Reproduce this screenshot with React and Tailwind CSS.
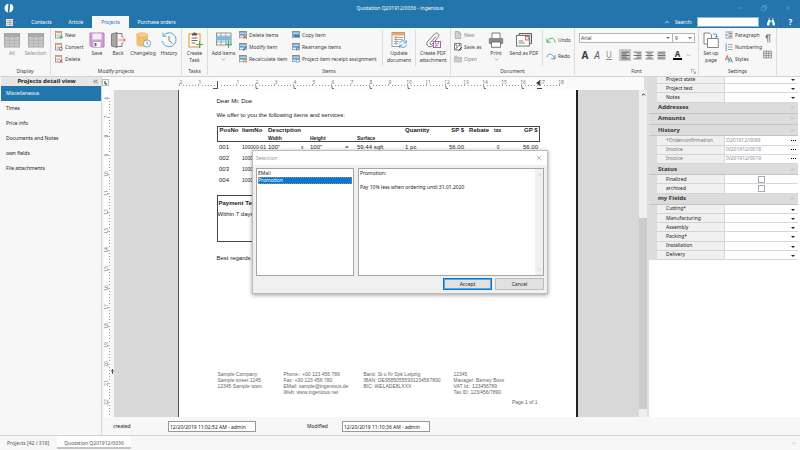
import { ChevronDown, ChevronUp, ChevronsLeft, Minus, X } from "lucide-react";
import { FaBinoculars } from "react-icons/fa";
import clsx from "clsx";

const GREY = "#6b6b6b";
const BLUE = "#4a9bd1";

/* ---------- large ribbon icons (16 x 16) ---------- */

const Svg = ({ size = 16, children }) => (
  <svg width={size} height={size} viewBox="0 0 16 16" fill="none" className="shrink-0">
    {children}
  </svg>
);

const GridIcon = () => (
  <Svg>
    <rect x="0.5" y="1.5" width="15" height="13.5" fill="#c6c6c6" stroke="#a9a9a9" />
    <rect x="1" y="2" width="14" height="3" fill="#aaa" />
    <path d="M1 8.5H15M1 11.5H15M5.5 5V15M10.5 5V15" stroke="#b2b2b2" strokeWidth="0.7" />
  </Svg>
);

const SaveIcon = () => (
  <Svg>
    <path d="M1 1H15V15H2.5L1 13.5Z" fill="#cf9fd3" stroke="#b57dbb" />
    <rect x="3.5" y="1.5" width="9" height="6" fill="#f6eef7" />
    <rect x="4.5" y="10" width="7" height="5" fill="#fff" />
    <rect x="5.5" y="11" width="2" height="3.5" fill="#8d5c93" />
  </Svg>
);

const BackIcon = () => (
  <Svg>
    <path d="M7 1.5H12V5M12 11V14.5H7" stroke={GREY} strokeWidth="0.9" />
    <path d="M1.5 2L7 0.5V15.5L1.5 14Z" fill="#a8a8a8" stroke={GREY} strokeWidth="0.8" />
    <path d="M8.5 8H15M12.5 5L15.3 8L12.5 11" stroke="#ea5a50" strokeWidth="0.9" />
  </Svg>
);

const ChangelogIcon = () => (
  <Svg>
    <path d="M1.5 3V12.5C1.5 15.5 13 15.5 13 12.5V3" fill="#f2bf6c" />
    <ellipse cx="7.2" cy="3" rx="5.8" ry="2.2" fill="#f6cf8b" stroke="#e6a94c" strokeWidth="0.6" />
    <circle cx="12" cy="11.5" r="3.6" fill="#fff" stroke={BLUE} strokeWidth="0.8" />
    <path d="M12 9.5V11.7L13.5 12.7" stroke="#555" strokeWidth="0.7" />
  </Svg>
);

const HistoryIcon = () => (
  <Svg>
    <path d="M2.5 3.5A7 7 0 1 1 1.2 9" stroke={BLUE} strokeWidth="0.9" />
    <path d="M2 0.8V4.3H5.5" stroke={BLUE} strokeWidth="0.9" />
    <path d="M8 4V8.5L11.5 11.5" stroke={GREY} strokeWidth="0.9" />
  </Svg>
);

const TaskIcon = () => (
  <Svg>
    <rect x="2" y="2" width="11" height="13" fill="#fff" stroke="#eda653" strokeWidth="1.3" />
    <path d="M5 3.5V1.5H6.5V0.5H8.5V1.5H10V3.5Z" fill="#555" />
    <path d="M4.5 6H10.5M4.5 8.5H10.5M4.5 11H8.5" stroke={GREY} strokeWidth="1" />
    <path d="M12.5 9V16M9 12.5H16" stroke="#3fae69" strokeWidth="1.1" />
  </Svg>
);

const AddItemsIcon = () => (
  <Svg>
    <rect x="0.5" y="1" width="14.5" height="12" fill="#fff" stroke="#777" strokeWidth="0.8" />
    <path d="M5 1V13M10 1V13M0.5 4H15M0.5 10H15" stroke="#888" strokeWidth="0.7" />
    <rect x="0.3" y="4.5" width="15" height="4" fill="#7bb8e2" />
    <path d="M12.5 8.5V16M9 12.3H16" stroke="#3fae69" strokeWidth="1.1" />
  </Svg>
);

const UpdateIcon = () => (
  <Svg>
    <rect x="1" y="0.5" width="12.5" height="14" fill="#fff" stroke="#888" strokeWidth="0.8" />
    <rect x="1.2" y="0.8" width="12" height="2.7" fill="#f1a45d" />
    <path d="M3 5.5H12M3 7.5H12M3 9.5H8M3 11.5H7M5 4V13" stroke="#888" strokeWidth="0.7" />
    <circle cx="12" cy="12" r="4" fill="#f7f7f7" />
    <path d="M8.5 11.5A3.5 3.5 0 0 1 15 10.5M15.5 12.5A3.5 3.5 0 0 1 9 13.8M15.3 8V11H12.5M8.7 16V13.3H11.5" stroke={BLUE} strokeWidth="0.9" />
  </Svg>
);

const PdfAttachIcon = () => (
  <Svg>
    <path d="M11 4.5L5.5 10.5C4 12 6 13.5 7.3 12L13 5.5C15.5 2.5 12 -0.5 9.5 2L3 9C-0.5 13 4.5 17 8 13.5" stroke={GREY} strokeWidth="0.9" />
    <rect x="8.5" y="9.5" width="7" height="6" fill="#fff" stroke="#a55fae" />
    <path d="M10.5 9.5V12H13.5V9.5M10.5 15V13.5H13" stroke="#a55fae" strokeWidth="0.8" />
  </Svg>
);

const PrintIcon = () => (
  <Svg>
    <path d="M4 6V1H12V6" fill="#fff" stroke={GREY} strokeWidth="0.9" />
    <rect x="0.8" y="6" width="14.4" height="6" rx="0.8" fill="#8a8a8a" />
    <rect x="2" y="7.5" width="1.5" height="1.2" fill="#4a9bd1" />
    <path d="M3.5 10H12.5V15.3H3.5Z" fill="#fff" stroke={GREY} strokeWidth="0.9" />
  </Svg>
);

const SendIcon = () => (
  <Svg>
    <path d="M3 3.5V1.5H15.5V11.5H13.5" fill="#ddd" stroke="#555" strokeWidth="0.9" />
    <rect x="0.5" y="3.5" width="12.8" height="10.5" fill="#fff" stroke="#666" strokeWidth="0.9" />
    <rect x="9.5" y="4.5" width="2.7" height="3.5" fill="#fff" stroke="#e25549" strokeWidth="0.9" />
    <path d="M2.5 9H7.5M2.5 11H8.5" stroke="#777" strokeWidth="0.9" />
  </Svg>
);

const PageSetupIcon = () => (
  <Svg>
    <path d="M1 1H6.5L8.5 3V12H1Z" fill="#fff" stroke="#777" strokeWidth="0.9" />
    <path d="M4.5 6.5H15.3V15.5H4.5Z" fill="#fff" stroke="#777" strokeWidth="0.9" />
    <path d="M10 2H13.5V5.5M11.8 4L13.5 5.7L15.2 4" stroke={BLUE} strokeWidth="0.9" />
  </Svg>
);

/* ---------- small ribbon icons (8 x 8) ---------- */

const RecordIcon = ({ kind }) => (
  <Svg size={8}>
    <rect x="1" y="1" width="12" height="13" fill="#fff" stroke="#777" strokeWidth="1.4" />
    <rect x="1" y="1" width="12" height="3" fill="#eda45c" />
    <path d="M3 6.5H11M3 9H9M3 11.5H7" stroke="#999" strokeWidth="1.1" />
    {kind === "new" && <path d="M12 8V16M8 12H16" stroke="#3fae69" strokeWidth="1.8" />}
    {kind === "convert" && <circle cx="11.5" cy="11.5" r="3" fill="#fff" stroke="#555" strokeWidth="1.6" />}
    {kind === "delete" && <path d="M9 9L15.5 15.5M15.5 9L9 15.5" stroke="#e0443c" strokeWidth="1.8" />}
  </Svg>
);

const ItemIcon = ({ kind }) => (
  <Svg size={8}>
    <rect x="1" y="1.5" width="14" height="12" fill="#fff" stroke="#777" strokeWidth="1.2" />
    <rect x="0.5" y="1" width="15" height="2" fill="#666" />
    <rect x="1" y="5" width="14" height="4.5" fill="#5aa7db" />
    <path d="M5.5 9.5V14M10 9.5V14" stroke="#999" />
    {kind === "delete" && <path d="M9 9L15.5 15.5M15.5 9L9 15.5" stroke="#e0443c" strokeWidth="1.8" />}
    {kind === "modify" && <path d="M8 15L14.5 8" stroke="#2b7fbf" strokeWidth="2.4" />}
    {kind === "recalc" && <path d="M9 15L14 8M9 9.5H12M12 14H15.5" stroke="#ee8f2d" strokeWidth="1.9" />}
    {kind === "copy" && <rect x="3" y="8" width="12" height="4" fill="#2b83c4" />}
    {kind === "sort" && <path d="M9 9V15M12.5 15V8M10.5 10.5L12.5 8L15 10.5" stroke="#2b83c4" strokeWidth="1.5" />}
    {kind === "assign" && <circle cx="11.5" cy="11.5" r="3.2" fill="#fff" stroke="#3b8ec9" strokeWidth="1.5" />}
  </Svg>
);

const FileIcon = () => (
  <Svg size={8}>
    <path d="M2.5 1H9.5L13.5 5V15H2.5Z" fill="#d2d2d2" stroke="#999" strokeWidth="1.3" />
    <path d="M9.5 1V5H13.5" stroke="#999" strokeWidth="1.2" />
  </Svg>
);

const SaveAsIcon = () => (
  <Svg size={8}>
    <path d="M1 1H14V14H1Z" fill="#fff" stroke="#555" strokeWidth="1.5" />
    <path d="M4 1V6H11V1M4 14V9.5H8" stroke="#555" strokeWidth="1.4" />
    <path d="M9 15L15.5 8.5" stroke="#333" strokeWidth="2" />
  </Svg>
);

const FolderIcon = () => (
  <Svg size={8}>
    <path d="M1 2.5H6L7.5 4.5H15V14H1Z" fill="#cfcfcf" stroke="#a6a6a6" strokeWidth="1.2" />
    <path d="M1.5 7H14.5" stroke="#b0b0b0" />
  </Svg>
);

const ParagraphIcon = () => (
  <Svg size={8}>
    <path d="M1 2H15M7 5H15M7 8H15M7 11H15M1 14H15" stroke="#666" strokeWidth="1.4" />
    <path d="M0 8H4M2.5 5.5L5 8L2.5 10.5" stroke="#3b8ec9" strokeWidth="1.6" />
  </Svg>
);

const NumberingIcon = () => (
  <Svg size={8}>
    <path d="M6 3H15M6 8H15M6 13H15" stroke="#777" strokeWidth="1.3" />
    <path d="M2.5 1V15M1 1.5H2.5M1 6H4M1 10.5H4M1 15H4" stroke="#3b8ec9" strokeWidth="1.2" />
  </Svg>
);

const StylesIcon = () => (
  <Svg size={8}>
    <path d="M0.5 11L4.5 1L8 11M2 8H7" stroke="#e0443c" strokeWidth="1.6" />
    <path d="M7 15L11 5L15 15M8.5 12H13.5" stroke="#3b8ec9" strokeWidth="1.7" />
  </Svg>
);

const CurveArrow = ({ redo }) => (
  <Svg size={10}>
    {redo ? (
      <path d="M1.5 10C2 4 9 2 14 12M14.5 6.5V12.5H8.5" stroke={BLUE} strokeWidth="1.5" />
    ) : (
      <path d="M14.5 12C14 4 7 2 2 11M1.5 5.5V11.5H7.5" stroke="#3fae69" strokeWidth="1.5" />
    )}
  </Svg>
);

const AlignIcon = ({ kind }) => {
  const short = { left: "M1 5H10M1 11H10", right: "M6 5H15M6 11H15", center: "M4 5H12M4 11H12", justify: "M1 5H15M1 11H15" };
  return (
    <Svg size={9}>
      <path d={`M1 2H15M1 8H15M1 14H15${short[kind]}`} stroke="#555" strokeWidth="1.5" />
    </Svg>
  );
};

/* ---------- ribbon building blocks ---------- */

const BigButton = ({ icon, lines, width, arrow, muted }) => (
  <button className={clsx("flex flex-col items-center pt-1", width, muted && "text-[#8a8a8a]")}>
    {icon}
    <span className="mt-[2px] leading-[7px]">
      {lines.map((line) => (
        <span key={line} className="block whitespace-nowrap">{line}</span>
      ))}
    </span>
    {arrow && <ChevronDown size={5} />}
  </button>
);

const SmallButton = ({ icon, label, muted }) => (
  <button className={clsx("flex h-3 items-center gap-[2px] whitespace-nowrap", muted && "text-[#8a8a8a]")}>
    {icon}
    {label}
  </button>
);

const Group = ({ label, width, children, launcher }) => (
  <section className={clsx("relative shrink-0 border-r border-[#dcdcdc]", width)}>
    <div className="flex h-10">{children}</div>
    <h2 className="text-center leading-[7px]">{label}</h2>
    {launcher && (
      <button aria-label="Font settings" className="absolute right-[2px] bottom-px">
        <Svg size={5}>
          <path d="M1 12V1H12M6 6L14 14M14 8V14H8" stroke="#777" strokeWidth="1.8" />
        </Svg>
      </button>
    )}
  </section>
);

const Divider = () => <div className="mt-[2px] h-9 w-px shrink-0 bg-[#dcdcdc]" />;

const TitleBar = () => (
  <header className="bg-[#2276ab] text-white">
    <div className="grid h-4 grid-cols-[1fr_auto_1fr] items-center">
      <svg width="10" height="10" viewBox="0 0 16 16" className="ml-1">
        <path d="M7 1C2 2 0 6 1.5 11C2 13 4 14.5 6 15Z" fill="#fff" />
        <path d="M10 1C14 2 16 6 14.5 10C13.5 13 11.5 14.5 8.5 15Z" fill="#fff" />
      </svg>
      <h1>Quotation Q201912/0036 - ingenious</h1>
      <div className="flex justify-end gap-[18px] pr-[9px] text-[#78adcf]">
        <button aria-label="Minimize"><Minus size={6} /></button>
        <button aria-label="Restore">
          <Svg size={6}>
            <path d="M1 5H11V15H1ZM5 5V1H15V11H11" stroke="currentColor" strokeWidth="1.6" />
          </Svg>
        </button>
        <button aria-label="Close"><X size={6} /></button>
      </div>
    </div>
    <nav className="flex h-3 items-center">
      <button aria-label="Menu" className="ml-[6px] flex w-[17px] items-center gap-px">
        <Svg size={7}>
          <path d="M0 0H16V16H0Z" fill="#f1ebe6" />
          <path d="M1 4H15M1 8H15M1 12H15M9 1V15" stroke="#857a74" strokeWidth="1.2" />
        </Svg>
        <ChevronDown size={3} />
      </button>
      <a href="#contacts" className="w-[37px] text-center">Contacts</a>
      <a href="#article" className="w-8 text-center">Article</a>
      <a href="#projects" className="h-3 w-[37px] bg-[#f7f7f7] text-center leading-[12px] text-[#2276ab]">Projects</a>
      <a href="#orders" className="w-[55px] text-center">Purchase orders</a>
      <div className="ml-auto flex items-center">
        <ChevronUp size={6} strokeWidth={3} />
        <label htmlFor="search" className="ml-[5px] w-[22px]">Search:</label>
        <input id="search" className="h-[10px] w-[62px] border border-[#8fb6d0] bg-white px-1 text-black outline-none" />
        <button aria-label="Find" className="ml-[3px] flex h-[10px] w-[17px] items-center justify-center border border-[#3f6fb4]">
          <FaBinoculars size={8} />
        </button>
        <button aria-label="Help" className="mr-px ml-[3px] h-[10px] w-[17px] border border-[#3f6fb4] text-[8px] leading-[8px] font-bold">?</button>
      </div>
    </nav>
  </header>
);

const Ribbon = () => (
  <div className="flex overflow-hidden border-b border-[#d2d2d2] bg-[#f7f7f7] pb-px text-[#3c3c3c]">
    <Group label="Display" width="w-[51px]">
      <BigButton icon={<GridIcon />} lines={["All"]} width="w-6" muted />
      <BigButton icon={<GridIcon />} lines={["Selection"]} width="w-[23px]" muted />
    </Group>
    <Group label="Modify projects" width="w-[131px]">
      <div className="w-[34px] shrink-0 pt-px pl-1">
        <SmallButton icon={<RecordIcon kind="new" />} label="New" />
        <SmallButton icon={<RecordIcon kind="convert" />} label="Convert" />
        <SmallButton icon={<RecordIcon kind="delete" />} label="Delete" />
      </div>
      <BigButton icon={<SaveIcon />} lines={["Save"]} width="w-6" />
      <BigButton icon={<BackIcon />} lines={["Back"]} width="w-[18px]" />
      <BigButton icon={<ChangelogIcon />} lines={["Changelog"]} width="w-8" />
      <BigButton icon={<HistoryIcon />} lines={["History"]} width="w-5" />
    </Group>
    <Group label="Tasks" width="w-[26px]">
      <BigButton icon={<TaskIcon />} lines={["Create", "Task"]} width="w-full" />
    </Group>
    <Group label="Items" width="w-[243px]">
      <BigButton icon={<AddItemsIcon />} lines={["Add items"]} width="w-[31px]" arrow />
      <div className="w-[53px] pt-px">
        <SmallButton icon={<ItemIcon kind="delete" />} label="Delete items" />
        <SmallButton icon={<ItemIcon kind="modify" />} label="Modify item" />
        <SmallButton icon={<ItemIcon kind="recalc" />} label="Recalculate item" />
      </div>
      <div className="w-[90px] pt-px">
        <SmallButton icon={<ItemIcon kind="copy" />} label="Copy item" />
        <SmallButton icon={<ItemIcon kind="sort" />} label="Rearrange items" />
        <SmallButton icon={<ItemIcon kind="assign" />} label="Project item receipt assignment" />
      </div>
      <Divider />
      <BigButton icon={<UpdateIcon />} lines={["Update", "document"]} width="w-8" />
      <Divider />
      <BigButton icon={<PdfAttachIcon />} lines={["Create PDF", "attachment"]} width="w-[34px]" />
    </Group>
    <Group label="Document" width="w-[124px]">
      <div className="w-[35px] pt-px pl-[3px]">
        <SmallButton icon={<FileIcon />} label="New" muted />
        <SmallButton icon={<SaveAsIcon />} label="Save as" />
        <SmallButton icon={<FolderIcon />} label="Open" muted />
      </div>
      <BigButton icon={<PrintIcon />} lines={["Print"]} width="w-5" arrow />
      <BigButton icon={<SendIcon />} lines={["Send as PDF"]} width="w-9" />
      <Divider />
      <div className="flex flex-col gap-1 pt-[6px] pl-[3px]">
        <SmallButton icon={<CurveArrow />} label="Undo" />
        <SmallButton icon={<CurveArrow redo />} label="Redo" />
      </div>
    </Group>
    <Group label="Font" width="w-[124px]" launcher>
      <div className="flex w-full flex-col px-1 pt-[5px]">
        <div className="flex w-[116px]">
          <span className="relative flex w-[94px]">
            <select aria-label="Font family" className="h-[10px] w-full appearance-none border border-[#b5b5b5] bg-white px-px leading-[8px]">
              <option>Arial</option>
            </select>
            <DropArrow />
          </span>
          <span className="relative flex w-[22px]">
            <select aria-label="Font size" className="h-[10px] w-full appearance-none border border-l-0 border-[#b5b5b5] bg-white px-[2px] leading-[8px]">
              <option>9</option>
            </select>
            <DropArrow />
          </span>
        </div>
        <div className="mt-[6px] flex h-3 items-center">
          <button aria-label="Bold" className="w-3 text-[10px] leading-[12px] font-bold">A</button>
          <button aria-label="Italic" className="w-3 text-[10px] leading-[12px] text-[#666] italic">A</button>
          <button aria-label="Underline" className="w-3 text-[8px] leading-[12px] text-[#888] underline">U</button>
          <button aria-label="Align left" className="ml-1 flex h-3 w-3 items-center justify-center bg-[#c9c9c9]"><AlignIcon kind="left" /></button>
          <button aria-label="Align right" className="flex w-3 justify-center"><AlignIcon kind="right" /></button>
          <button aria-label="Align center" className="flex w-3 justify-center"><AlignIcon kind="center" /></button>
          <button aria-label="Justify" className="flex w-3 justify-center"><AlignIcon kind="justify" /></button>
          <button aria-label="Text colour" className="ml-[6px] w-[9px] border-b-2 border-black text-[8px] leading-[8px] font-bold">A</button>
          <ChevronDown size={5} className="ml-1" />
        </div>
      </div>
    </Group>
    <Group label="Settings" width="w-[78px]">
      <BigButton icon={<PageSetupIcon />} lines={["Set up", "page"]} width="w-6" />
      <div className="w-10 pt-px pl-[2px]">
        <SmallButton icon={<ParagraphIcon />} label="Paragraph" />
        <SmallButton icon={<NumberingIcon />} label="Numbering" />
        <SmallButton icon={<StylesIcon />} label="Styles" />
      </div>
      <div className="flex flex-col gap-[7px] pt-[6px]">
        <button aria-label="Show marks">
          <Svg size={9}>
            <path d="M8 1.5A3.5 3.5 0 0 0 8 8.5Z" fill="#777" />
            <path d="M6 1.5H14M8.5 1.5V15M12 1.5V15" stroke="#777" strokeWidth="1.5" />
          </Svg>
        </button>
        <button aria-label="Gridlines">
          <Svg size={9}>
            <path d="M1 2H15V14H1ZM1 6H15M1 10H15M5.7 2V14M10.3 2V14" stroke="#777" strokeWidth="1.3" />
          </Svg>
        </button>
      </div>
    </Group>
  </div>
);

/* arrow drawn over the right edge of a drop-down */
const DropArrow = ({ dark }) => (
  <svg width="4" height="2" viewBox="0 0 4 2" className="pointer-events-none absolute top-1 right-[3px]">
    <path d="M0 0H4L2 2Z" fill={dark ? "#222" : "#777"} />
  </svg>
);

/* ---------- left navigation ---------- */

const views = ["Miscellaneous", "Times", "Price info", "Documents and Notes", "own fields", "File attachments"];

const Sidebar = () => (
  <aside className="w-[102px] shrink-0 border-r border-[#d5d5d5] pl-px">
    <div className="flex h-[9px] items-center bg-[#e6e6e6] pr-[2px]">
      <h2 className="flex-1 text-center text-[6px] font-bold text-[#222]">Projects detail view</h2>
      <button aria-label="Collapse"><ChevronsLeft size={7} color="#222" /></button>
    </div>
    <nav>
      {views.map((view, i) => (
        <a
          key={view}
          href="#view"
          className={clsx("block h-[15px] pl-[5px] leading-[15px]", i === 0 ? "bg-[#2276ab] text-white" : "text-[#222]")}
        >
          {view}
        </a>
      ))}
    </nav>
  </aside>
);

/* ---------- rulers ---------- */

const UNIT = 19;

const HorizontalRuler = () => (
  <svg width="400" height="13" viewBox="0 0 400 13" className="shrink-0" fontSize="5" fill="#777">
    <rect x="39" y="2" width="321" height="10" fill="#fff" />
    {Array.from({ length: 21 }, (_, i) => i - 2).map((n) => {
      const x = 40 + n * UNIT;
      return (
        <g key={n}>
          {n !== 0 && <text x={x + 1} y="7" textAnchor="middle">{Math.abs(n)}</text>}
          <path d={`M${x - 0.5} 7V9`} stroke="#888" strokeWidth="0.8" />
          {n < 18 && <path d={`M${x + 3} 8.5H${x + 17}`} stroke="#999" strokeDasharray="1 2" />}
          {n > 0 && n < 17 && n % 2 === 0 && <path d={`M${x} 9V11.5H${x + 2}`} stroke="#777" fill="none" />}
        </g>
      );
    })}
    <path d="M39.5 4V12M35 11.5H39" stroke="#555" />
    <path d="M358 6L362 3V9Z M359 11H364V12H359Z" fill="#444" />
  </svg>
);

const VerticalRuler = () => (
  <svg width="12" height="327" viewBox="0 0 12 327" className="shrink-0" fontSize="5" fill="#777">
    <rect x="2" y="0" width="6" height="327" fill="#fff" />
    {Array.from({ length: 17 }, (_, i) => i + 6).map((n) => {
      const y = 8 + (n - 6) * UNIT;
      return (
        <g key={n}>
          <text x="6" y={y} textAnchor="middle" transform={`rotate(-90 6 ${y})`}>{n}</text>
          <path d={`M5 ${y + 0.5}H8`} stroke="#999" strokeWidth="0.7" />
          <path d={`M7.5 ${y + 3}V${y + 17}`} stroke="#999" strokeDasharray="1 2" />
        </g>
      );
    })}
    <path d="M9 281H12M10.5 279V284" stroke="#555" />
  </svg>
);

/* ---------- printed quotation ---------- */

const positions = [
  { no: "001", item: "100000-01", width: '100"', x: "x", height: '100"', eq: "=", surface: "59.44 sqft", qty: "1 pc", price: "56.00", tax: "0", total: "56.00" },
  { no: "002", item: "1000" },
  { no: "003", item: "1000" },
  { no: "004", item: "1000" },
];

const footer = [
  ["Sample Company", "Sample street 1245", "12345 Sample town"],
  ["Phone.: +00 123 456 789", "Fax: +00 123 456 780", "EMail: sample@ingenious.de", "Web: www.ingenious.net"],
  ["Bank: St u Kr Spk Leipzig", "IBAN: DE95850555931234567890", "BIC: WELADE8LXXX"],
  ["12345", "Manager: Barney Boss", "VAT Id.: 123456789", "Tax ID: 123/456/7890"],
];

const Paper = () => (
  <article className="flex w-[400px] shrink-0 flex-col border-r-2 border-l border-r-[#222] border-l-[#555] bg-white pr-9 pl-[38px] font-['Liberation_Sans',Arial,sans-serif] text-[6px] leading-[7px] text-[#222]">
    <p className="pt-2">Dear Mr. Doe</p>
    <p className="pt-[7px]">We offer to you the following items and services:</p>
    <table className="mt-[7px] w-[322px] table-fixed border-collapse">
      <colgroup>
        <col className="w-[25px]" />
        <col className="w-[26px]" />
        <col className="w-[33px]" />
        <col className="w-[9px]" />
        <col className="w-[35px]" />
        <col className="w-3" />
        <col className="w-12" />
        <col className="w-[33px]" />
        <col className="w-[26px]" />
        <col className="w-[28px]" />
        <col className="w-3" />
        <col className="w-[35px]" />
      </colgroup>
      <thead className="border border-[#444] text-left align-top">
        <tr className="h-[8px]">
          <th className="pl-[2px]">PosNo</th>
          <th>ItemNo</th>
          <th colSpan={5}>Description</th>
          <th>Quantity</th>
          <th className="text-right">SP $</th>
          <th className="pl-[5px]">Rebate</th>
          <th className="pl-[2px] text-[5px]">tax</th>
          <th className="pr-px text-right">GP $</th>
        </tr>
        <tr className="h-[7px] text-[5px] leading-[6px]">
          <th colSpan={2} />
          <th>Width</th>
          <th />
          <th>Height</th>
          <th />
          <th>Surface</th>
          <th colSpan={5} />
        </tr>
      </thead>
      <tbody>
        {positions.map((p) => (
          <tr key={p.no} className="h-[11px] whitespace-nowrap">
            <td className="pl-[2px]">{p.no}</td>
            <td className="text-[5px]">{p.item}</td>
            <td>{p.width}</td>
            <td className="text-[5px]">{p.x}</td>
            <td>{p.height}</td>
            <td>{p.eq}</td>
            <td>{p.surface}</td>
            <td>{p.qty}</td>
            <td className="text-right">{p.price}</td>
            <td />
            <td className="text-center text-[5px]">{p.tax}</td>
            <td className="pr-px text-right">{p.total}</td>
          </tr>
        ))}
      </tbody>
    </table>
    <section className="mt-[9px] h-[47px] w-[322px] border border-[#444]">
      <h3 className="px-px pt-1 font-bold">Payment Terms</h3>
      <p className="pt-1">Within 7 days</p>
    </section>
    <p className="pt-[13px]">Best regards</p>
    <footer className="mt-auto text-[5px] text-[#666]">
      <div className="grid grid-cols-[66px_80px_90px_1fr] pl-px leading-[6px]">
        {footer.map((lines) => (
          <address key={lines[0]} className="whitespace-nowrap not-italic">
            {lines.map((line) => (
              <div key={line}>{line}</div>
            ))}
          </address>
        ))}
      </div>
      <p className="pt-1 pr-[2px] pb-[11px] text-right">Page 1 of 1</p>
    </footer>
  </article>
);

const Editor = () => (
  <section className="flex min-w-0 flex-1 flex-col">
    <div className="flex h-[13px] shrink-0 overflow-hidden bg-[#fafafa]">
      <button aria-label="Tab stop" className="mt-[2px] h-[7px] w-[7px] shrink-0 border border-[#bbb] bg-white">
        <svg width="5" height="5" viewBox="0 0 5 5">
          <path d="M2 1V4H4" stroke="#222" fill="none" />
        </svg>
      </button>
      <div className="flex flex-1 justify-center pl-[2px]">
        <HorizontalRuler />
      </div>
      <div className="w-[5px] bg-[#dedede]" />
    </div>
    <div className="flex flex-1">
      <VerticalRuler />
      <div className="flex min-w-0 flex-1 justify-center bg-[#d8d8d8] pl-[2px]">
        <Paper />
      </div>
      <div className="flex w-2 flex-col items-center bg-[#f0f0f0]">
        <ChevronUp size={5} strokeWidth={4} className="my-[2px]" />
        <div className="mt-auto mb-2 h-[191px] w-full bg-[#cbcbcb]" />
      </div>
      <div className="w-[2px] bg-[#dedede]" />
    </div>
  </section>
);

/* ---------- property grid ---------- */

const fields = [
  { rows: ["Project state", "Project text", "Notes"], type: "list" },
  { title: "Addresses" },
  { title: "Amounts" },
  {
    title: "History",
    type: "link",
    rows: ["*Orderconfirmation", "Invoice", "Invoice"],
    values: ["O201912/0069", "IV201912/0018", "IV201912/0019"],
  },
  { title: "Status", type: "check", rows: ["Finalized", "archived"] },
  {
    title: "my Fields",
    type: "list",
    rows: ["Cutting*", "Manufacturing", "Assembly", "Packing*", "Installation", "Delivery"],
  },
];

const Field = ({ id, label, type, value }) => (
  <div className="flex min-h-0 flex-[9] bg-[#dcdcdc] pl-2">
    <label
      htmlFor={id}
      className={clsx("flex w-[67px] shrink-0 items-center border-b border-[#d4d4d4] bg-[#f0f0f0] pl-[9px]", type === "link" ? "text-[#777]" : "text-[#222]")}
    >
      {label}
    </label>
    <div className="relative flex min-w-0 flex-1 items-center border-b border-l border-[#d8d8d8] bg-white">
      {type === "list" && (
        <>
          <select id={id} className="h-full w-full appearance-none bg-transparent outline-none">
            <option></option>
          </select>
          <DropArrow dark />
        </>
      )}
      {type === "link" && (
        <>
          <input id={id} readOnly defaultValue={value} className="min-w-0 flex-1 pl-px text-[#8a8a9a] outline-none" />
          <button aria-label="Open" className="flex gap-px pr-[2px]">
            <i className="size-px bg-black" />
            <i className="size-px bg-black" />
            <i className="size-px bg-black" />
          </button>
        </>
      )}
      {type === "check" && (
        <input id={id} type="checkbox" className="mx-auto size-[7px] appearance-none border border-[#a9a9b8] bg-white" />
      )}
    </div>
  </div>
);

const PropertyGrid = () => (
  <aside className="w-[151px] shrink-0 bg-white pr-[2px]">
    <div className="flex h-[183px] flex-col justify-end overflow-hidden">
      <div className="flex h-[185px] shrink-0 flex-col">
        {fields.map(({ title, rows = [], type, values }, g) => [
          title && (
            <h3 key={title} className="flex min-h-0 flex-[10] items-center justify-between border-b border-[#c4c4c4] bg-[#dcdcdc] pr-[3px] pl-[9px] text-[6px] font-bold text-[#333]">
              {title}
              {rows.length ? <ChevronUp size={5} color="#888" /> : <ChevronDown size={5} color="#888" />}
            </h3>
          ),
          ...rows.map((label, i) => (
            <Field key={`${g}-${i}`} id={`field-${g}-${i}`} label={label} type={type} value={values?.[i]} />
          )),
        ])}
      </div>
    </div>
  </aside>
);

/* ---------- selection dialog ---------- */

const SelectionDialog = () => (
  <div className="pointer-events-none absolute inset-0 flex items-center justify-center pb-[6px]">
    <div
      role="dialog"
      aria-label="Selection"
      className="pointer-events-auto w-[296px] border border-[#bdbdbd] bg-[#f0f0f0] text-[#222] shadow-[0_1px_4px_rgba(0,0,0,0.4)]"
    >
      <div className="flex h-[14px] items-center justify-between bg-white pr-1 pl-[3px] text-[#999]">
        <h2>Selection</h2>
        <button aria-label="Close"><X size={8} /></button>
      </div>
      <div className="flex h-[111px] gap-1 px-[3px] pt-[3px]">
        <ul role="listbox" aria-label="Text blocks" className="w-[98px] border border-[#a5a5a5] bg-white p-px leading-[7px]">
          <li role="option" aria-selected="false" className="h-[7px]">EMail</li>
          <li role="option" aria-selected="true" className="h-[7px] bg-[#0078d7] text-white outline-1 -outline-offset-1 outline-[#b98a5c] outline-dotted">Promotion</li>
        </ul>
        <div className="flex flex-1 border border-[#a5a5a5] bg-white">
          <textarea
            aria-label="Text"
            readOnly
            defaultValue={"Promotion:\n\nPay 10% less when ordering until 31.01.2020"}
            className="flex-1 resize-none overflow-hidden px-px pt-px leading-[7px] outline-none"
          />
          <div className="flex w-2 flex-col items-center justify-between bg-[#f0f0f0] py-[3px] text-[#999]">
            <ChevronUp size={5} />
            <ChevronDown size={5} />
          </div>
        </div>
      </div>
      <div className="flex justify-end gap-[3px] pt-[2px] pr-[3px] pb-[3px]">
        <button className="h-3 w-[49px] border border-[#0078d7] bg-[#e1e1e1] leading-[10px] outline-1 -outline-offset-2 outline-[#5aa7e4]">Accept</button>
        <button className="h-3 w-[49px] border border-[#bdbdbd] bg-[#e1e1e1] leading-[10px]">Cancel</button>
      </div>
    </div>
  </div>
);

const StatusBar = () => (
  <div className="flex h-[18px] items-center bg-[#f7f7f7] pt-px pl-[11px] text-[#222]">
    <label htmlFor="created" className="w-[55px]">created</label>
    <input id="created" readOnly defaultValue="12/20/2019 11:02:52 AM - admin" className="h-[11px] w-[88px] border border-[#999] bg-white px-px" />
    <label htmlFor="modified" className="ml-[51px] w-[35px]">Modified</label>
    <input id="modified" readOnly defaultValue="12/20/2019 11:10:36 AM - admin" className="h-[11px] w-[88px] border border-[#999] bg-white px-px" />
  </div>
);

export default function App() {
  return (
    <div className="relative flex min-h-screen flex-col bg-[#f7f7f7] font-['Noto_Sans','Open_Sans',sans-serif] text-[5px] leading-[7px]">
      <TitleBar />
      <Ribbon />
      <main className="flex flex-1">
        <Sidebar />
        <div className="flex min-w-0 flex-1 flex-col">
          <div className="flex flex-1">
            <Editor />
            <PropertyGrid />
          </div>
          <StatusBar />
        </div>
      </main>
      <nav className="flex h-[15px] border-t border-[#d2d2d2] text-[#555]">
        <a href="#list" className="w-[57px] pl-[7px] leading-[14px]">Projects [42 / 319]</a>
        <a href="#quotation" className="h-[13px] w-[74px] border-b-2 border-[#c4c4c4] bg-white text-center leading-[14px]">Quotation Q201912/0036</a>
        <button aria-label="More tabs" className="ml-auto pr-1"><ChevronUp size={4} /></button>
      </nav>
      <SelectionDialog />
    </div>
  );
}
